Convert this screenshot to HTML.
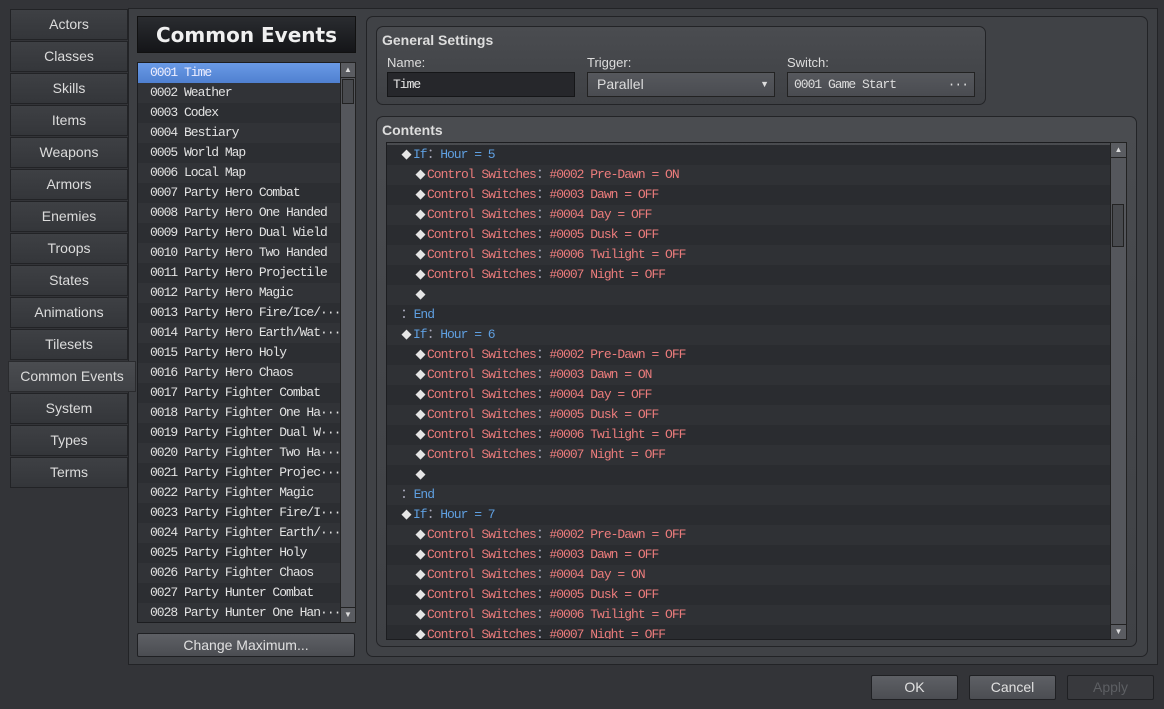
<!DOCTYPE html>
<html><head><meta charset="utf-8"><style>
*{margin:0;padding:0;box-sizing:border-box}
body{width:1164px;height:709px;overflow:hidden;background:#333438;font-family:"Liberation Sans","DejaVu Sans",sans-serif;position:relative;color:#ddd}
.abs{position:absolute}
.tab{position:absolute;left:10px;width:118px;height:31px;background:linear-gradient(#3e4044,#34363a);border:1px solid #222326;color:#dcdcdc;font-size:14px;text-align:center;line-height:29px}
.tab.sel{left:8px;width:128px;background:linear-gradient(#4a4c50,#404246);border-color:#2a2b2e;z-index:2}
.mono{font-family:"Liberation Mono","DejaVu Sans Mono",monospace;font-size:13px;letter-spacing:-1px}
.list div{height:20px;line-height:20px;padding-left:12px;color:#e2e2e2;white-space:nowrap;overflow:hidden}
.list div:nth-child(odd){background:#2c2e32}
.list div:nth-child(even){background:#313337}
.list div.s{background:linear-gradient(#6a9ae6,#4f80d0);color:#eef}
.grp{position:absolute;border:1px solid #232427;border-radius:7px;background:linear-gradient(#4a4c50,#3f4145)}
.lbl{position:absolute;font-size:13px;color:#ddd}
.btn{position:absolute;height:25px;border:1px solid #1f2023;border-radius:2px;background:linear-gradient(#5e6065,#4b4d52);color:#e0e0e0;font-size:14px;text-align:center;line-height:23px}
.c div{height:20px;line-height:20px;white-space:nowrap;position:relative}
.c div:nth-child(odd){background:#2a2c30}
.c div:nth-child(even){background:#2f3135}
.b{color:#5f9fe0}.r{color:#ec7c7c}
.d{display:inline-block;width:13px;color:#e6e6e6;font-family:"DejaVu Sans",sans-serif;font-size:13px;letter-spacing:0;text-align:center}
.k{display:inline-block;width:13.6px;text-align:center;color:#aab}
.i1{padding-left:13px}.i2{padding-left:27px}
.sb{position:absolute;background:#55575c;border:1px solid #222}
</style></head><body>
<div class="abs" style="left:128px;top:8px;width:1030px;height:657px;border:1px solid #222326;background:#3d3f43"></div>

<div class="tab" style="top:9px">Actors</div>
<div class="tab" style="top:41px">Classes</div>
<div class="tab" style="top:73px">Skills</div>
<div class="tab" style="top:105px">Items</div>
<div class="tab" style="top:137px">Weapons</div>
<div class="tab" style="top:169px">Armors</div>
<div class="tab" style="top:201px">Enemies</div>
<div class="tab" style="top:233px">Troops</div>
<div class="tab" style="top:265px">States</div>
<div class="tab" style="top:297px">Animations</div>
<div class="tab" style="top:329px">Tilesets</div>
<div class="tab sel" style="top:361px">Common Events</div>
<div class="tab" style="top:393px">System</div>
<div class="tab" style="top:425px">Types</div>
<div class="tab" style="top:457px">Terms</div>

<div class="abs" style="left:137px;top:16px;width:219px;height:37px;background:linear-gradient(#2a2c30,#141518);border:1px solid #111;color:#f0f0f0;font-weight:bold;font-family:'DejaVu Sans',sans-serif;font-size:20px;text-align:center;line-height:36px">Common Events</div>

<div class="abs list mono" style="left:137px;top:62px;width:204px;height:561px;overflow:hidden;border:1px solid #1c1d20">
<div class="s">0001 Time</div><div>0002 Weather</div><div>0003 Codex</div><div>0004 Bestiary</div><div>0005 World Map</div><div>0006 Local Map</div><div>0007 Party Hero Combat</div><div>0008 Party Hero One Handed</div><div>0009 Party Hero Dual Wield</div><div>0010 Party Hero Two Handed</div><div>0011 Party Hero Projectile</div><div>0012 Party Hero Magic</div><div>0013 Party Hero Fire/Ice/···</div><div>0014 Party Hero Earth/Wat···</div><div>0015 Party Hero Holy</div><div>0016 Party Hero Chaos</div><div>0017 Party Fighter Combat</div><div>0018 Party Fighter One Ha···</div><div>0019 Party Fighter Dual W···</div><div>0020 Party Fighter Two Ha···</div><div>0021 Party Fighter Projec···</div><div>0022 Party Fighter Magic</div><div>0023 Party Fighter Fire/I···</div><div>0024 Party Fighter Earth/···</div><div>0025 Party Fighter Holy</div><div>0026 Party Fighter Chaos</div><div>0027 Party Hunter Combat</div><div>0028 Party Hunter One Han···</div>
</div>
<div class="sb" style="left:340px;top:62px;width:16px;height:561px"></div>
<div class="abs" style="left:341px;top:63px;width:14px;height:15px;background:#5a5c61;border-bottom:1px solid #222;color:#ddd;font-size:8px;text-align:center;line-height:14px">▲</div>
<div class="abs" style="left:342px;top:79px;width:12px;height:25px;background:#484a4e;border:1px solid #222"></div>
<div class="abs" style="left:341px;top:607px;width:14px;height:15px;background:#5a5c61;border-top:1px solid #222;color:#ddd;font-size:8px;text-align:center;line-height:14px">▼</div>

<div class="btn" style="left:137px;top:633px;width:218px;height:24px">Change Maximum...</div>

<div class="abs" style="left:366px;top:16px;width:782px;height:641px;border:1px solid #222326;border-radius:7px;background:#404246"></div>

<div class="grp" style="left:376px;top:26px;width:610px;height:79px"></div>
<div class="lbl" style="left:382px;top:32px;font-weight:bold;font-size:14px">General Settings</div>
<div class="lbl" style="left:387px;top:55px">Name:</div>
<div class="lbl" style="left:587px;top:55px">Trigger:</div>
<div class="lbl" style="left:787px;top:55px">Switch:</div>
<div class="abs mono" style="left:387px;top:72px;width:188px;height:25px;background:#26272b;border:1px solid #151618;line-height:23px;padding-left:5px;color:#e6e6e6">Time</div>
<div class="abs" style="left:587px;top:72px;width:188px;height:25px;background:linear-gradient(#56585d,#4a4c51);border:1px solid #222;line-height:23px;padding-left:9px;font-size:14px;color:#ddd">Parallel<span style="position:absolute;right:5px;font-size:9px">▼</span></div>
<div class="abs mono" style="left:787px;top:72px;width:188px;height:25px;background:linear-gradient(#56585d,#4a4c51);border:1px solid #222;line-height:23px;padding-left:6px;color:#ddd">0001 Game Start<span style="position:absolute;right:6px">···</span></div>

<div class="grp" style="left:376px;top:116px;width:761px;height:531px"></div>
<div class="lbl" style="left:382px;top:122px;font-weight:bold;font-size:14px">Contents</div>
<div class="abs c mono" style="left:386px;top:142px;width:725px;height:498px;overflow:hidden;border:1px solid #1c1d20;padding-top:2px">
<div class="i1"><span class="d">◆</span><span class="b">If<span class="k">：</span>Hour = 5</span></div>
<div class="i2"><span class="d">◆</span><span class="r">Control Switches<span class="k">：</span>#0002 Pre-Dawn = ON</span></div>
<div class="i2"><span class="d">◆</span><span class="r">Control Switches<span class="k">：</span>#0003 Dawn = OFF</span></div>
<div class="i2"><span class="d">◆</span><span class="r">Control Switches<span class="k">：</span>#0004 Day = OFF</span></div>
<div class="i2"><span class="d">◆</span><span class="r">Control Switches<span class="k">：</span>#0005 Dusk = OFF</span></div>
<div class="i2"><span class="d">◆</span><span class="r">Control Switches<span class="k">：</span>#0006 Twilight = OFF</span></div>
<div class="i2"><span class="d">◆</span><span class="r">Control Switches<span class="k">：</span>#0007 Night = OFF</span></div>
<div class="i2"><span class="d">◆</span></div>
<div class="i1"><span class="k">：</span><span class="b">End</span></div>
<div class="i1"><span class="d">◆</span><span class="b">If<span class="k">：</span>Hour = 6</span></div>
<div class="i2"><span class="d">◆</span><span class="r">Control Switches<span class="k">：</span>#0002 Pre-Dawn = OFF</span></div>
<div class="i2"><span class="d">◆</span><span class="r">Control Switches<span class="k">：</span>#0003 Dawn = ON</span></div>
<div class="i2"><span class="d">◆</span><span class="r">Control Switches<span class="k">：</span>#0004 Day = OFF</span></div>
<div class="i2"><span class="d">◆</span><span class="r">Control Switches<span class="k">：</span>#0005 Dusk = OFF</span></div>
<div class="i2"><span class="d">◆</span><span class="r">Control Switches<span class="k">：</span>#0006 Twilight = OFF</span></div>
<div class="i2"><span class="d">◆</span><span class="r">Control Switches<span class="k">：</span>#0007 Night = OFF</span></div>
<div class="i2"><span class="d">◆</span></div>
<div class="i1"><span class="k">：</span><span class="b">End</span></div>
<div class="i1"><span class="d">◆</span><span class="b">If<span class="k">：</span>Hour = 7</span></div>
<div class="i2"><span class="d">◆</span><span class="r">Control Switches<span class="k">：</span>#0002 Pre-Dawn = OFF</span></div>
<div class="i2"><span class="d">◆</span><span class="r">Control Switches<span class="k">：</span>#0003 Dawn = OFF</span></div>
<div class="i2"><span class="d">◆</span><span class="r">Control Switches<span class="k">：</span>#0004 Day = ON</span></div>
<div class="i2"><span class="d">◆</span><span class="r">Control Switches<span class="k">：</span>#0005 Dusk = OFF</span></div>
<div class="i2"><span class="d">◆</span><span class="r">Control Switches<span class="k">：</span>#0006 Twilight = OFF</span></div>
<div class="i2"><span class="d">◆</span><span class="r">Control Switches<span class="k">：</span>#0007 Night = OFF</span></div>
</div>
<div class="sb" style="left:1110px;top:142px;width:17px;height:498px"></div>
<div class="abs" style="left:1111px;top:143px;width:15px;height:15px;background:#5a5c61;border-bottom:1px solid #222;color:#ddd;font-size:8px;text-align:center;line-height:14px">▲</div>
<div class="abs" style="left:1112px;top:204px;width:12px;height:43px;background:#484a4e;border:1px solid #222"></div>
<div class="abs" style="left:1111px;top:624px;width:15px;height:15px;background:#5a5c61;border-top:1px solid #222;color:#ddd;font-size:8px;text-align:center;line-height:14px">▼</div>

<div class="btn" style="left:871px;top:675px;width:87px">OK</div>
<div class="btn" style="left:969px;top:675px;width:87px">Cancel</div>
<div class="btn" style="left:1067px;top:675px;width:87px;background:#38393d;color:#5d5f63">Apply</div>
</body></html>
